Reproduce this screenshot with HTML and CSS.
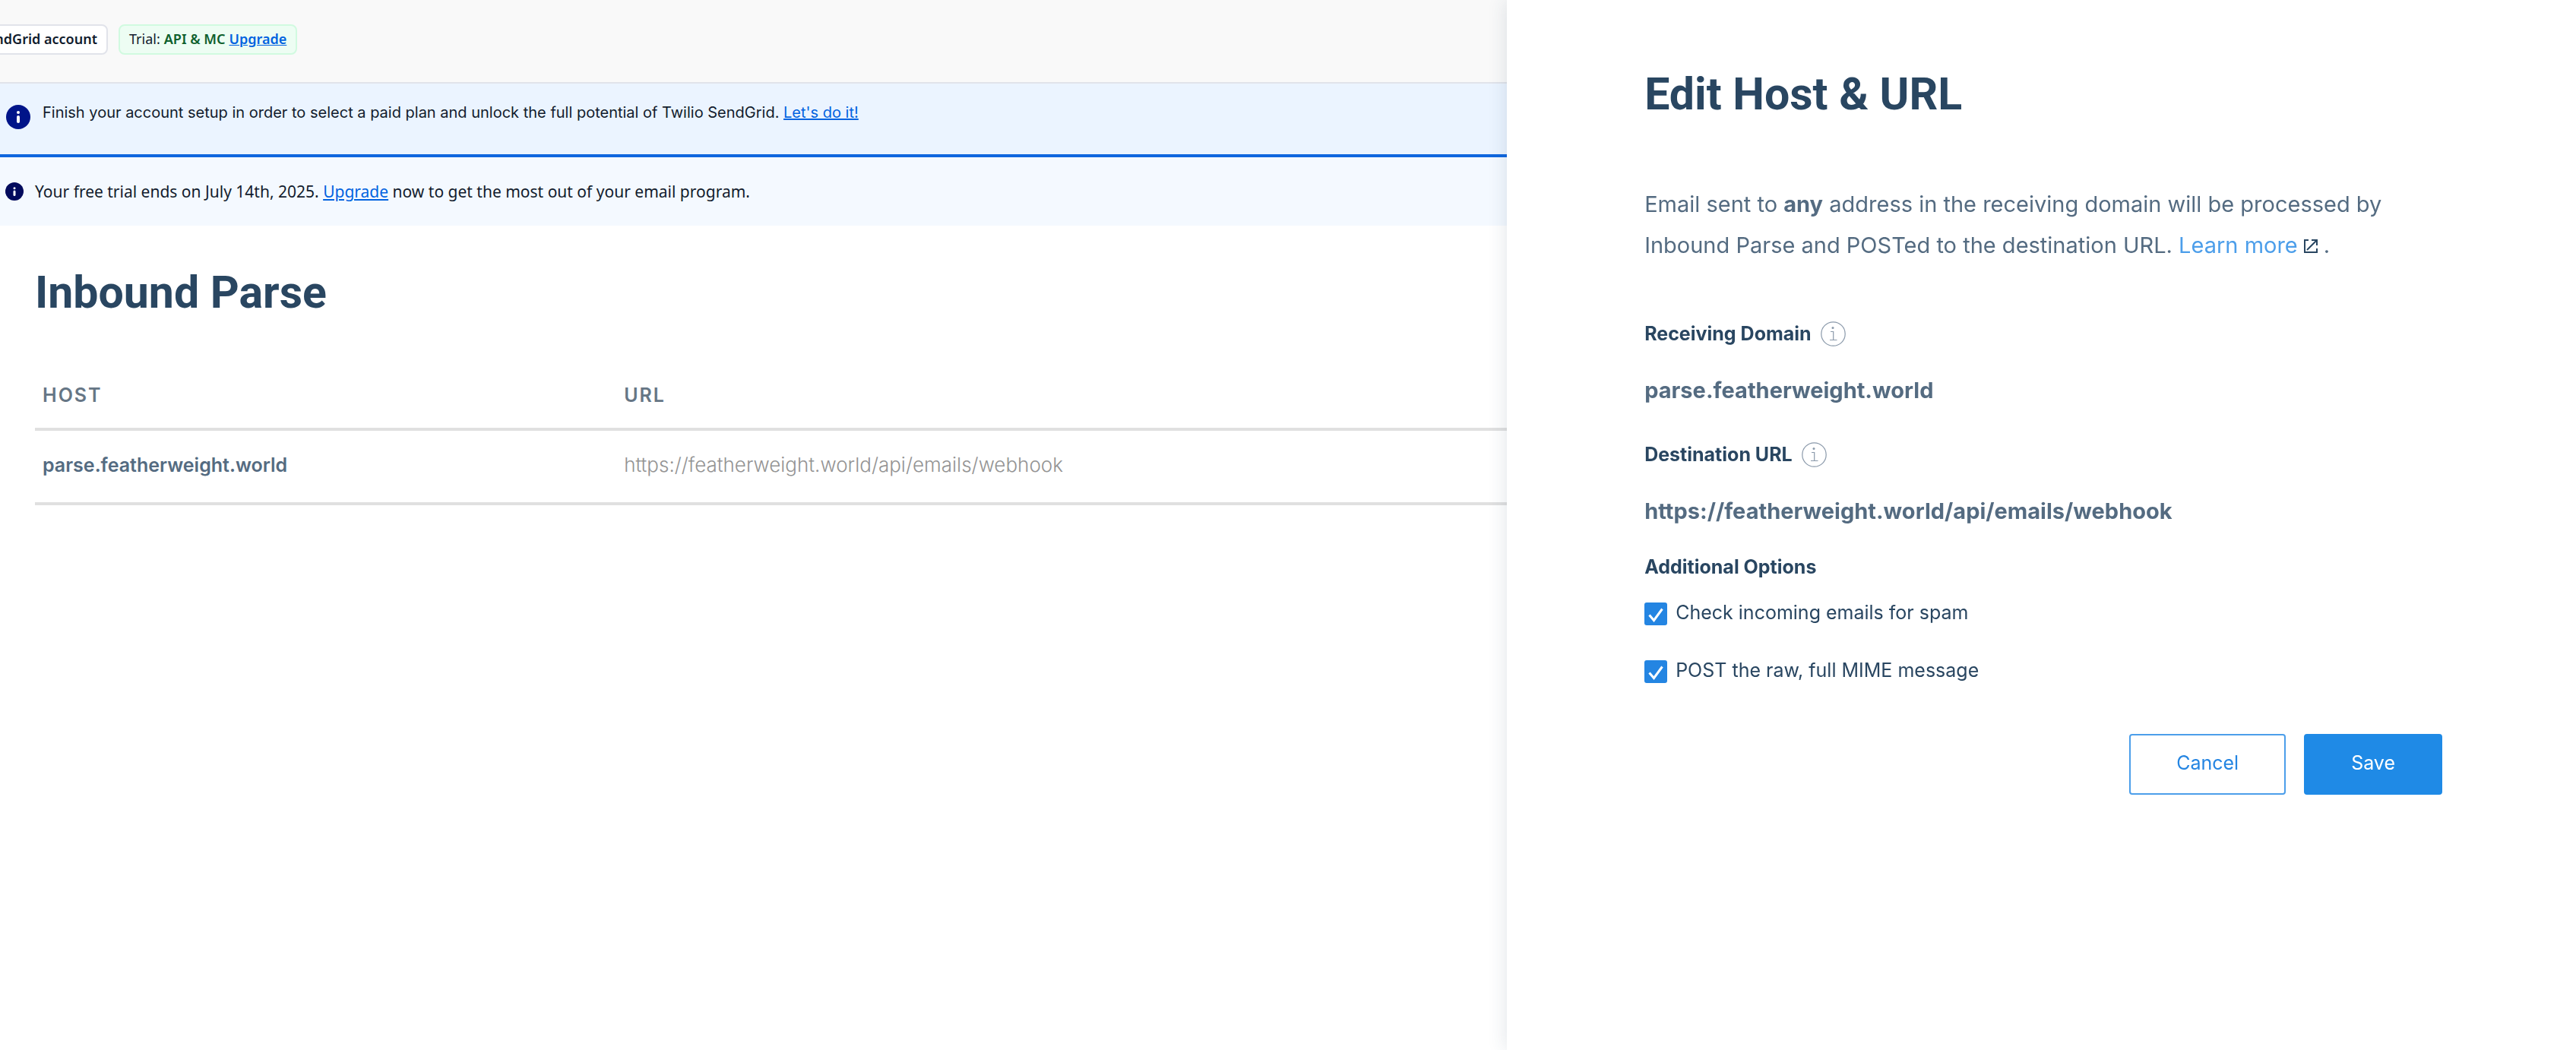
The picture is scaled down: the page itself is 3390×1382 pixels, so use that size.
FILE: index.html
```html
<!DOCTYPE html>
<html lang="en">
<head>
<meta charset="utf-8">
<meta name="viewport" content="width=device-width, initial-scale=1">
<title>Inbound Parse</title>
<link rel="stylesheet" href="styles.css">
</head>
<body>
<div class="page">
  <header class="topbar">
    <div class="account-slot"><span class="badge">SendGrid account</span></div>
    <span class="badge badge-trial"><span>Trial:</span><strong>API &amp; MC</strong><a href="#">Upgrade</a></span>
  </header>

  <section class="banner banner-setup">
    <svg class="banner-icon-lg" viewBox="0 0 32 32" aria-hidden="true">
      <circle cx="16" cy="16" r="16" fill="#001489"/>
      <circle cx="16" cy="10" r="2" fill="#fff"/>
      <rect x="14" y="14" width="4" height="10" rx="2" fill="#fff"/>
    </svg>
    <p>Finish your account setup in order to select a paid plan and unlock the full potential of Twilio SendGrid. <a href="#">Let's do it!</a></p>
  </section>

  <section class="banner banner-trial">
    <svg class="banner-icon-sm" viewBox="0 0 24 24" aria-hidden="true">
      <circle cx="12" cy="12" r="12" fill="#030b5d"/>
      <circle cx="12" cy="7.7" r="1.5" fill="#fff"/>
      <rect x="10.5" y="10.5" width="3" height="7.5" rx="1.5" fill="#fff"/>
    </svg>
    <p>Your free trial ends on July 14th, 2025. <a href="#">Upgrade</a> now to get the most out of your email program.</p>
  </section>

  <main class="content">
    <h1 class="title">Inbound Parse</h1>
    <table class="hosts">
      <thead>
        <tr><th class="col-host" scope="col">HOST</th><th scope="col">URL</th></tr>
      </thead>
      <tbody>
        <tr><td class="host">parse.featherweight.world</td><td class="url">https://featherweight.world/api/emails/webhook</td></tr>
      </tbody>
    </table>
  </main>
</div>

<aside class="drawer" aria-labelledby="drawer-title">
  <h2 class="title" id="drawer-title">Edit Host &amp; URL</h2>
  <p class="intro">Email sent to <strong>any</strong> address in the receiving domain will be processed by Inbound Parse and POSTed to the destination URL. <a href="#">Learn more</a><svg class="external" viewBox="0 0 18 18" aria-hidden="true"><path d="M6 1H1v16h16v-5M10 1h7v7M17 1 4 14" fill="none" stroke="#294661" stroke-width="2"/></svg>.</p>

  <form>
    <dl class="fields">
      <dt class="label">Receiving Domain
        <svg class="info" viewBox="0 0 33 33" aria-hidden="true"><circle cx="16.5" cy="16.5" r="15.7" fill="none" stroke="#8a99aa" stroke-width="1.2"/><circle cx="16" cy="8.5" r="1.5" fill="#8a99aa"/><path d="M13 13.5h3.7v11M12 24.5h9.5" fill="none" stroke="#8a99aa" stroke-width="1.2"/></svg>
      </dt>
      <dd class="value">parse.featherweight.world</dd>
      <dt class="label">Destination URL
        <svg class="info" viewBox="0 0 33 33" aria-hidden="true"><circle cx="16.5" cy="16.5" r="15.7" fill="none" stroke="#8a99aa" stroke-width="1.2"/><circle cx="16" cy="8.5" r="1.5" fill="#8a99aa"/><path d="M13 13.5h3.7v11M12 24.5h9.5" fill="none" stroke="#8a99aa" stroke-width="1.2"/></svg>
      </dt>
      <dd class="value">https://featherweight.world/api/emails/webhook</dd>
    </dl>

    <fieldset class="options">
      <legend class="label">Additional Options</legend>
      <div class="option"><input class="check" type="checkbox" id="spam" checked><label for="spam">Check incoming emails for spam</label></div>
      <div class="option"><input class="check" type="checkbox" id="raw" checked><label for="raw">POST the raw, full MIME message</label></div>
    </fieldset>

    <div class="actions">
      <button class="btn btn-outline" type="button">Cancel</button>
      <button class="btn btn-primary" type="submit">Save</button>
    </div>
  </form>
</aside>
</body>
</html>
```
FILE: styles.css
```css
* { box-sizing: border-box; }

body {
  margin: 0;
  background: #fff;
  color: #121c2d;
  font-family: Inter, "Liberation Sans", sans-serif;
  overflow-x: hidden;
}

h1, h2, p, dl, dd, fieldset { margin: 0; padding: 0; border: 0; }
legend { padding: 0; }

/* Top bar */
.topbar {
  display: flex;
  align-items: center;
  gap: 14px;
  padding: 32px 0 36px;
  background: #f9f9f9;
  border-bottom: 2px solid #e1e3ea;
}
.account-slot {
  display: flex;
  justify-content: flex-end;
  width: 142px;
  overflow: hidden;
}
.badge {
  display: flex;
  flex: none;
  align-items: center;
  gap: 5px;
  height: 40px;
  padding: 0 12px 2px;
  border: 2px solid #e1e3ea;
  border-radius: 8px;
  background: #fff;
  font: 600 18px/24px "Noto Sans", sans-serif;
  white-space: nowrap;
}
.badge-trial {
  background: #edfdf3;
  border-color: #d1fae0;
  font-weight: 400;
}
.badge-trial strong { color: #0e602d; font-weight: 600; }
.badge-trial a { font-weight: 600; }
.topbar a, .banner a { color: #0263e0; text-decoration: underline; }

/* Banners */
.banner { display: flex; }
.banner-setup {
  gap: 16px;
  padding: 28px 8px 33px;
  background: #ebf4ff;
  border-bottom: 4px solid #0f66de;
  font-size: 20px;
  line-height: 20px;
}
.banner-trial {
  align-items: center;
  gap: 15px;
  padding: 30px 7px;
  background: #f4f9ff;
  font: 21px/30px "Noto Sans", sans-serif;
}
.banner-icon-lg { flex: none; width: 32px; height: 32px; }
.banner-icon-sm { flex: none; width: 24px; height: 24px; }

/* Main content */
.content { padding: 52px 46px; }
.title {
  color: #294661;
  font: 700 59px/72px Roboto, sans-serif;
}
.hosts {
  width: 100%;
  margin-top: 63px;
  border-collapse: separate;
  border-spacing: 0;
  font-size: 25px;
  line-height: 32px;
  text-align: left;
}
.hosts th {
  padding: 20px 10px 27px;
  border-bottom: 4px solid #e0e0e0;
  color: #667685;
  font-weight: 600;
  letter-spacing: 2px;
}
.hosts td {
  padding: 29px 10px 33px;
  border-bottom: 4px solid #e0e0e0;
}
.hosts .col-host { width: 23.2%; }
.hosts .host { color: #546b81; font-weight: 600; }
.hosts .url { color: #949494; font-size: 26px; font-weight: 300; }

/* Drawer lies over the page */
.drawer {
  position: fixed;
  top: 0;
  right: 0;
  bottom: 0;
  width: 41.5%;
  min-width: 1100px;
  max-width: 100%;
  padding: 88px 176px 88px 181px;
  overflow-y: auto;
  background: #fff;
  box-shadow: 0 0 24px rgba(41, 70, 97, 0.15);
}
.intro {
  max-width: 1000px;
  margin-top: 82px;
  color: #546b81;
  font-size: 29px;
  line-height: 54px;
}
.intro a { color: #4c9eea; text-decoration: none; }
.external { width: 18px; height: 18px; margin: 0 8px; }

.fields { margin-top: 72px; }
.label {
  display: flex;
  align-items: center;
  gap: 12px;
  color: #294661;
  font-size: 25px;
  font-weight: 700;
  line-height: 34px;
}
.info { width: 33px; height: 33px; }
.value {
  margin: 40px 0 49px;
  color: #546b81;
  font-size: 29px;
  font-weight: 700;
  line-height: 36px;
}
.value:last-child { margin-bottom: 38px; }

.options { color: #294661; font-size: 25px; line-height: 26px; }
.option {
  display: flex;
  align-items: flex-start;
  gap: 11px;
  margin-top: 30px;
}
.option + .option { margin-top: 46px; }
.check {
  appearance: none;
  width: 30px;
  height: 30px;
  margin: 0;
  border-radius: 3px;
  background: #2485e2;
}
.check:checked {
  background-image: url("data:image/svg+xml,%3Csvg xmlns='http://www.w3.org/2000/svg' viewBox='0 0 30 30'%3E%3Cpath d='M6.5 16.5l6 7L23.500 8.500' fill='none' stroke='white' stroke-width='3'/%3E%3C/svg%3E");
}

.actions {
  display: flex;
  justify-content: flex-end;
  gap: 24px;
  margin-top: 67px;
}
.btn {
  height: 80px;
  padding: 0 60px 4px;
  border: 2px solid #4c9eea;
  border-radius: 4px;
  font: 25px/32px Inter, sans-serif;
}
.btn-outline { background: #fff; color: #2485e2; }
.btn-primary { background: #1f8ae6; border-color: #1f8ae6; color: #fff; }
```
